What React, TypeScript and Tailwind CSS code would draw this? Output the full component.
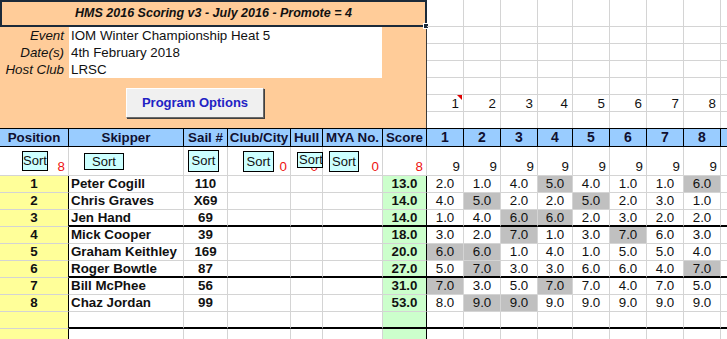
import clsx from "clsx";

type Skipper = {
  pos: number;
  name: string;
  sail: string;
  score: string;
  races: number[];
  drops: number[];
};

const skippers: Skipper[] = [
  { pos: 1, name: "Peter Cogill", sail: "110", score: "13.0", races: [2, 1, 4, 5, 4, 1, 1, 6], drops: [3, 7] },
  { pos: 2, name: "Chris Graves", sail: "X69", score: "14.0", races: [4, 5, 2, 2, 5, 2, 3, 1], drops: [1, 4] },
  { pos: 3, name: "Jen Hand", sail: "69", score: "14.0", races: [1, 4, 6, 6, 2, 3, 2, 2], drops: [2, 3] },
  { pos: 4, name: "Mick Cooper", sail: "39", score: "18.0", races: [3, 2, 7, 1, 3, 7, 6, 3], drops: [2, 5] },
  { pos: 5, name: "Graham Keithley", sail: "169", score: "20.0", races: [6, 6, 1, 4, 1, 5, 5, 4], drops: [0, 1] },
  { pos: 6, name: "Roger Bowtle", sail: "87", score: "27.0", races: [5, 7, 3, 3, 6, 6, 4, 7], drops: [1, 7] },
  { pos: 7, name: "Bill McPhee", sail: "56", score: "31.0", races: [7, 3, 5, 7, 7, 4, 7, 5], drops: [0, 3] },
  { pos: 8, name: "Chaz Jordan", sail: "99", score: "53.0", races: [8, 9, 9, 9, 9, 9, 9, 9], drops: [1, 2] },
];

const races = [1, 2, 3, 4, 5, 6, 7, 8];
const headers = ["Position", "Skipper", "Sail #", "Club/City", "Hull", "MYA No.", "Score"];
const topRows = ["h-[27px]", "h-[17px]", "h-[17px]", "h-[17px]", "h-[17px]", "h-[17px]", "h-[16px]"];

function SortButton({ className, label = "Sort" }: { className: string; label?: string }) {
  return (
    <div
      className={clsx(
        "absolute z-10 flex items-center border border-black bg-[#ccffff] text-[13px] text-[#111]",
        className
      )}
    >
      {label}
    </div>
  );
}

function Count({ value, red = true }: { value: string; red?: boolean }) {
  return (
    <span className={clsx("leading-[17px]", red ? "text-[#ee1111]" : "text-[#111]")}>{value}</span>
  );
}

export default function App() {
  return (
    <div className="h-[339px] w-[727px] overflow-hidden bg-white font-['Liberation_Sans',Arial,sans-serif] text-[13.33px] text-[#111]">
      {/* top block: event details + empty race grid */}
      <div className="flex h-[128px]">
        <div className="flex w-[427px] flex-col bg-[#ffcc99]">
          <div className="relative flex h-[27px] items-center justify-center border-2 border-[#1b2a3a] text-[12.5px] font-bold italic">
            HMS 2016 Scoring v3 - July 2016 - Promote = 4
            <span className="absolute -bottom-[4px] -right-[4px] h-[6px] w-[6px] border border-white bg-[#1b2a3a]" />
          </div>
          <div className="flex flex-1 flex-col border-r border-[#3a3a3a]">
            {[
              ["Event", "IOM Winter Championship Heat 5"],
              ["Date(s)", "4th February 2018"],
              ["Host Club", "LRSC"],
            ].map(([label, value], i) => (
              <div key={label} className="grid h-[17px] grid-cols-[69px_313px_1fr] leading-[17px]">
                <div className="pr-[5px] text-right italic">{label}</div>
                <div className={clsx("bg-white pl-[2px]", i < 2 && "border-b border-[#d8d8d8]")}>{value}</div>
                <div />
              </div>
            ))}
            <div className="pl-[126px] pt-[10px]">
              <div className="flex h-[30px] w-[138px] items-center justify-center border border-b-[#6a6a6a] border-l-white border-r-[#6a6a6a] border-t-white bg-[#f0f0f0] text-[13px] font-bold text-[#2222c4] shadow-[1px_1px_0_#404040]">
                Program Options
              </div>
            </div>
          </div>
        </div>

        <div className="grid flex-1 grid-cols-[37px_37px_37px_35px_37px_37px_37px_37px_1fr]">
          {topRows.map((h, r) =>
            [...races, 0].map((n) => (
              <div
                key={`${r}-${n}`}
                className={clsx(
                  "relative pr-[4px] text-right leading-[17px]",
                  h,
                  n !== 0 && "border-r border-[#d4d4d4]",
                  r < 6 && "border-b border-[#d4d4d4]"
                )}
              >
                {r === 5 && n !== 0 ? n : null}
                {r === 5 && n === 1 && (
                  <span className="absolute right-[1px] top-0 h-0 w-0 border-l-[5px] border-t-[5px] border-l-transparent border-t-[#e00000]" />
                )}
              </div>
            ))
          )}
        </div>
      </div>

      {/* results sheet */}
      <div className="grid grid-cols-[69px_115px_44px_63px_32px_60px_44px_37px_37px_37px_35px_37px_37px_37px_37px_1fr]">
        {headers.map((h) => (
          <div
            key={h}
            className="h-[19px] border-b border-r border-t border-black bg-[#99ccff] text-center text-[13.33px] font-bold leading-[17px] text-[#101030]"
          >
            {h}
          </div>
        ))}
        {races.map((n) => (
          <div
            key={n}
            className="h-[19px] border-b border-r border-t border-black bg-[#99ccff] text-center text-[14px] font-bold leading-[17px] text-[#101030]"
          >
            {n}
          </div>
        ))}
        <div className="h-[19px] border-b border-t border-black bg-[#99ccff]" />

        {/* sort row */}
        <div className="relative flex h-[29px] items-end justify-end border-b border-r border-[#d4d4d4] pr-[3px]">
          <SortButton className="left-[22px] top-[4px] h-[20px] w-[26px] justify-center" />
          <Count value="8" />
        </div>
        <div className="relative h-[29px] border-b border-r border-[#d4d4d4]">
          <SortButton className="left-[15px] top-[6px] h-[17px] w-[40px] justify-center" />
        </div>
        <div className="relative h-[29px] border-b border-r border-[#d4d4d4]">
          <SortButton className="left-[4px] top-[3px] h-[22px] w-[31px] justify-center" />
        </div>
        <div className="relative flex h-[29px] items-end justify-end border-b border-r border-[#d4d4d4] pr-[3px]">
          <SortButton className="left-[15px] top-[4px] h-[21px] w-[31px] justify-center" />
          <Count value="0" />
        </div>
        <div className="relative flex h-[29px] items-end justify-end border-b border-r border-[#d4d4d4] pr-[4px]">
          <SortButton className="left-[6px] top-[5px] h-[16px] w-[26px] overflow-hidden whitespace-nowrap pl-[1px] leading-[12px]" label="Sort" />
          <Count value="0" />
        </div>
        <div className="relative flex h-[29px] items-end justify-end border-b border-r border-[#d4d4d4] pr-[3px]">
          <SortButton className="left-[6px] top-[4px] h-[21px] w-[30px] justify-center" />
          <Count value="0" />
        </div>
        <div className="flex h-[29px] items-end justify-end border-b border-r border-[#d4d4d4] pr-[3px]">
          <Count value="8" />
        </div>
        {races.map((n) => (
          <div key={n} className="flex h-[29px] items-end justify-end border-b border-r border-[#d4d4d4] pr-[3px]">
            <Count value="9" red={false} />
          </div>
        ))}
        <div className="h-[29px] border-b border-[#d4d4d4]" />

        {/* results */}
        {skippers.map((s, i) => {
          const line = i === 2 || i === 5 ? "border-b-2 border-b-black" : "border-b border-b-[#d4d4d4]";
          return [
            <div key={`p${i}`} className="h-[17px] border-b border-r border-b-[#d4d4d4] border-r-black bg-[#ffff99] text-center font-bold leading-[16px]">
              {s.pos}
            </div>,
            <div key={`n${i}`} className={clsx("h-[17px] border-r border-r-[#d4d4d4] pl-[2px] font-bold leading-[16px]", line)}>
              {s.name}
            </div>,
            <div key={`s${i}`} className={clsx("h-[17px] border-r border-r-[#d4d4d4] text-center font-bold leading-[16px]", line)}>
              {s.sail}
            </div>,
            <div key={`c${i}`} className={clsx("h-[17px] border-r border-r-[#d4d4d4]", line)} />,
            <div key={`h${i}`} className={clsx("h-[17px] border-r border-r-[#d4d4d4]", line)} />,
            <div key={`m${i}`} className={clsx("h-[17px] border-r border-r-[#d4d4d4]", line)} />,
            <div key={`t${i}`} className={clsx("h-[17px] border-r border-r-black bg-[#ccffcc] text-center font-bold leading-[16px]", line)}>
              {s.score}
            </div>,
            ...s.races.map((r, j) => (
              <div
                key={`r${i}-${j}`}
                className={clsx(
                  "h-[17px] border-r border-r-[#d4d4d4] text-center leading-[16px]",
                  s.drops.includes(j) && "bg-[#c0c0c0]",
                  line
                )}
              >
                {r.toFixed(1)}
              </div>
            )),
            <div key={`x${i}`} className={clsx("h-[17px]", line)} />,
          ];
        })}

        {/* blank row, then next block */}
        {[0, 1].map((b) =>
          [
            <div key={`bp${b}`} className="h-[17px] border-b border-r border-b-[#d4d4d4] border-r-black bg-[#ffff99]" />,
            ...Array.from({ length: 5 }, (_, k) => (
              <div
                key={`bc${b}-${k}`}
                className={clsx(
                  "h-[17px] border-r border-r-[#d4d4d4]",
                  b === 0 ? "border-b-2 border-b-black" : "border-b border-b-[#d4d4d4]"
                )}
              />
            )),
            <div
              key={`bt${b}`}
              className={clsx(
                "h-[17px] border-r border-r-black bg-[#ccffcc]",
                b === 0 ? "border-b-2 border-b-black" : "border-b border-b-[#d4d4d4]"
              )}
            />,
            ...Array.from({ length: 9 }, (_, k) => (
              <div
                key={`br${b}-${k}`}
                className={clsx(
                  "h-[17px]",
                  k < 8 && "border-r border-r-[#d4d4d4]",
                  b === 0 ? "border-b-2 border-b-black" : "border-b border-b-[#d4d4d4]"
                )}
              />
            )),
          ]
        )}
      </div>
    </div>
  );
}
